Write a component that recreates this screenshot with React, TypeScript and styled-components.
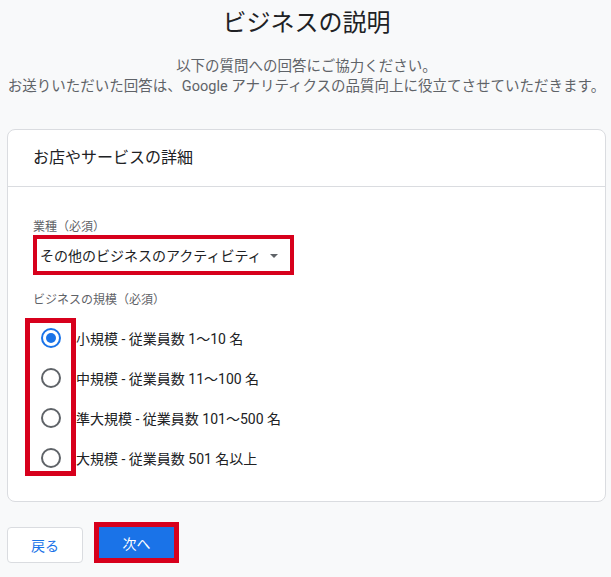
import React, { useState } from "react";
import styled, { createGlobalStyle } from "styled-components";

const Global = createGlobalStyle`
  html, body { margin: 0; padding: 0; background: #f8f9fa; }
  body {
    font-family: Roboto, "Noto Sans CJK JP", "Noto Sans", sans-serif;
    color: #202124;
    -webkit-font-smoothing: antialiased;
  }
`;

const ANNOT = "#d7001c";

const Page = styled.div`
  width: 611px;
  height: 577px;
  box-sizing: border-box;
  padding: 7px 5px 0 7px;
  display: flex;
  flex-direction: column;
  overflow: hidden;
`;

const Header = styled.header`
  text-align: center;
  display: flex;
  flex-direction: column;
  align-items: center;
`;

const Title = styled.h1`
  margin: 0;
  font-size: 24px;
  line-height: 32px;
  font-weight: 400;
  color: #202124;
`;

const Subtitle = styled.p`
  margin: 18px 0 0;
  font-size: 14.5px;
  line-height: 20px;
  color: #5f6368;
  white-space: nowrap;
`;

const Card = styled.section`
  margin-top: 32px;
  background: #fff;
  border: 1px solid #dadce0;
  border-radius: 8px;
`;

const CardHeader = styled.div`
  height: 56px;
  line-height: 56px;
  padding: 0 25px;
  font-size: 16px;
  color: #202124;
  border-bottom: 1px solid #dadce0;
`;

const CardBody = styled.div`
  padding: 32px 25px 23px;
  display: flex;
  flex-direction: column;
  align-items: flex-start;
`;

const FieldLabel = styled.div<{ $gap?: number }>`
  font-size: 12px;
  line-height: 16px;
  color: #5f6368;
  margin-bottom: ${(p) => p.$gap ?? 0}px;
`;

const SelectFrame = styled.div`
  border: 4px solid ${ANNOT};
  width: 261px;
  height: 40px;
  box-sizing: border-box;
  display: flex;
  align-items: center;
  padding: 0 0 0 3px;
  margin-bottom: 17px;
  cursor: pointer;
`;

const SelectText = styled.span`
  font-size: 14px;
  color: #202124;
  flex: 1;
  white-space: nowrap;
`;

const Caret = styled.span`
  width: 0;
  height: 0;
  border-left: 4px solid transparent;
  border-right: 4px solid transparent;
  border-top: 4px solid #5f6368;
  margin: 2px 12px 0 0;
`;

const RadioGroup = styled.div`
  position: relative;
  display: flex;
  flex-direction: column;
`;

const RadioFrame = styled.div`
  position: absolute;
  left: -8px;
  top: 0;
  width: 51px;
  height: 158px;
  box-sizing: border-box;
  border: 5px solid ${ANNOT};
  pointer-events: none;
`;

const RadioRow = styled.label`
  height: 40px;
  display: flex;
  align-items: center;
  gap: 15px;
  padding-left: 8px;
  cursor: pointer;
`;

const RadioIcon = styled.span<{ $on: boolean }>`
  width: 20px;
  height: 20px;
  box-sizing: border-box;
  border-radius: 50%;
  border: 2px solid ${(p) => (p.$on ? "#1a73e8" : "#5f6368")};
  display: flex;
  align-items: center;
  justify-content: center;
  &::after {
    content: "";
    width: 10px;
    height: 10px;
    border-radius: 50%;
    background: ${(p) => (p.$on ? "#1a73e8" : "transparent")};
  }
`;

const RadioText = styled.span`
  font-size: 14px;
  color: #202124;
  white-space: nowrap;
`;

const Actions = styled.div`
  margin-top: 20px;
  display: flex;
  align-items: center;
  gap: 11px;
`;

const BackButton = styled.button`
  width: 76px;
  height: 36px;
  margin-top: 4px;
  background: #fff;
  border: 1px solid #dadce0;
  border-radius: 4px;
  color: #1a73e8;
  font-family: inherit;
  font-size: 14px;
  font-weight: 400;
  cursor: pointer;
`;

const NextFrame = styled.div`
  border: 5px solid ${ANNOT};
  display: flex;
`;

const NextButton = styled.button`
  width: 75px;
  height: 31px;
  background: #1a73e8;
  border: none;
  border-radius: 0;
  color: #fff;
  font-family: inherit;
  font-size: 14px;
  font-weight: 400;
  cursor: pointer;
`;

const sizes = [
  "小規模 - 従業員数 1〜10 名",
  "中規模 - 従業員数 11〜100 名",
  "準大規模 - 従業員数 101〜500 名",
  "大規模 - 従業員数 501 名以上",
];

export default function App() {
  const [sel, setSel] = useState(0);
  return (
    <>
      <Global />
      <Page>
        <Header>
          <Title>ビジネスの説明</Title>
          <Subtitle>
            以下の質問への回答にご協力ください。
            <br />
            お送りいただいた回答は、Google アナリティクスの品質向上に役立てさせていただきます。
          </Subtitle>
        </Header>
        <Card>
          <CardHeader>お店やサービスの詳細</CardHeader>
          <CardBody>
            <FieldLabel>業種（必須）</FieldLabel>
            <SelectFrame>
              <SelectText>その他のビジネスのアクティビティ</SelectText>
              <Caret />
            </SelectFrame>
            <FieldLabel $gap={10}>ビジネスの規模（必須）</FieldLabel>
            <RadioGroup>
              {sizes.map((s, i) => (
                <RadioRow key={s} onClick={() => setSel(i)}>
                  <RadioIcon $on={sel === i} />
                  <RadioText>{s}</RadioText>
                </RadioRow>
              ))}
              <RadioFrame />
            </RadioGroup>
          </CardBody>
        </Card>
        <Actions>
          <BackButton>戻る</BackButton>
          <NextFrame>
            <NextButton>次へ</NextButton>
          </NextFrame>
        </Actions>
      </Page>
    </>
  );
}
